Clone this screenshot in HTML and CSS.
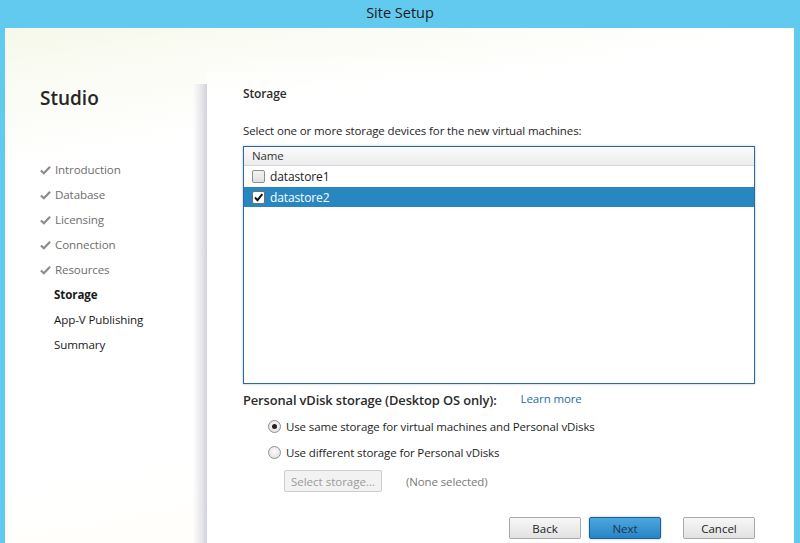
FILE: index.html
```html
<!DOCTYPE html>
<html lang="en">
<head>
    <meta charset="UTF-8">
    <title>Site Setup</title>
    <link rel="stylesheet" href="styles.css">
</head>
<body>
    <div class="window">
        <div class="titlebar">Site Setup</div>
        <div class="frame">
            <div class="sidebar">
                <h1 class="brand">Studio</h1>
                <ul class="steps">
                    <li class="step done"><svg class="tick" viewBox="0 0 12 10"><path d="M1 5.5 L4.2 8.6 L11 1.4" /></svg>Introduction</li>
                    <li class="step done"><svg class="tick" viewBox="0 0 12 10"><path d="M1 5.5 L4.2 8.6 L11 1.4" /></svg>Database</li>
                    <li class="step done"><svg class="tick" viewBox="0 0 12 10"><path d="M1 5.5 L4.2 8.6 L11 1.4" /></svg>Licensing</li>
                    <li class="step done"><svg class="tick" viewBox="0 0 12 10"><path d="M1 5.5 L4.2 8.6 L11 1.4" /></svg>Connection</li>
                    <li class="step done"><svg class="tick" viewBox="0 0 12 10"><path d="M1 5.5 L4.2 8.6 L11 1.4" /></svg>Resources</li>
                    <li class="step active">Storage</li>
                    <li class="step">App-V Publishing</li>
                    <li class="step">Summary</li>
                </ul>
            </div>
            <div class="panel">
                <h2 class="panel-title">Storage</h2>
                <p class="hint">Select one or more storage devices for the new virtual machines:</p>
                <div class="listbox">
                    <div class="list-head">Name</div>
                    <div class="list-row"><span class="check"></span>datastore1</div>
                    <div class="list-row selected"><span class="check checked"><svg viewBox="0 0 11 11"><path d="M2 5.5 L4.5 8.2 L9.3 2.2" /></svg></span>datastore2</div>
                </div>
                <div class="vdisk">
                    <span class="vdisk-label">Personal vDisk storage (Desktop OS only):</span>
                    <a class="learn" href="#">Learn more</a>
                </div>
                <div class="options">
                    <div class="option"><span class="radio on"></span>Use same storage for virtual machines and Personal vDisks</div>
                    <div class="option"><span class="radio"></span>Use different storage for Personal vDisks</div>
                    <div class="pick">
                        <button class="btn small" disabled>Select storage...</button>
                        <span class="none">(None selected)</span>
                    </div>
                </div>
                <div class="actions">
                    <button class="btn">Back</button>
                    <button class="btn primary">Next</button>
                    <button class="btn cancel">Cancel</button>
                </div>
            </div>
        </div>
    </div>
</body>
</html>
```

FILE: styles.css
```css
* {
    box-sizing: border-box;
}
body {
    margin: 0;
    font-family: "Open Sans", "Noto Sans", sans-serif;
    font-size: 11.5px;
    letter-spacing: -0.12px;
    color: #1e1e1e;
}
.window {
    width: 800px;
    height: 543px;
    display: flex;
    flex-direction: column;
    background: #62caef;
}
.titlebar {
    height: 28px;
    line-height: 26px;
    text-align: center;
    font-size: 14.5px;
    letter-spacing: 0;
    color: #1b1b1b;
}
.frame {
    flex: 1;
    display: flex;
    margin: 0 6px 0 5px;
    background: linear-gradient(170deg, #f6f8ea 0, #fbfcf5 70px, #ffffff 140px, #ffffff 70%, #fffdf4 100%);
}
.sidebar {
    width: 202px;
    padding-top: 56px;
    position: relative;
}
.brand {
    margin: 0 0 0 35px;
    font-size: 19px;
    font-weight: 600;
    line-height: 28px;
    letter-spacing: 0;
    color: #262626;
}
.steps {
    list-style: none;
    margin: 45px 0 0;
    padding: 0;
}
.step {
    position: relative;
    height: 25px;
    line-height: 25px;
    padding-left: 49px;
    font-size: 11.6px;
    color: #1a1a1a;
}
.step.done {
    color: #6e6e6e;
    padding-left: 35px;
}
.tick {
    width: 11px;
    height: 10px;
    margin-right: 4px;
    vertical-align: -1px;
    fill: none;
    stroke: #8c8c8c;
    stroke-width: 2.4;
}
.step.active {
    font-weight: 700;
}
.step.active::after {
    content: "";
    position: absolute;
    right: 0;
    top: 7px;
    border-top: 6px solid transparent;
    border-bottom: 6px solid transparent;
    border-right: 5px solid #ffffff;
}
.panel {
    flex: 1;
    position: relative;
    display: flex;
    flex-direction: column;
    padding: 57px 39px 4px 36px;
    background: linear-gradient(to bottom, rgba(255, 255, 255, 0) 20px, #ffffff 70px);
}
.panel::before {
    content: "";
    position: absolute;
    left: -14px;
    top: 56px;
    bottom: 0;
    width: 14px;
    background: linear-gradient(to right, rgba(220, 220, 230, 0) 0, #e6e6ec 60%, #d2d2dc 100%);
}
.panel-title {
    margin: 0;
    font-size: 12px;
    font-weight: 600;
    line-height: 18px;
    color: #2c2c2c;
}
.hint {
    margin: 20px 0 0;
    line-height: 16px;
}
.listbox {
    margin-top: 7px;
    height: 238px;
    border: 1px solid #33679a;
    box-shadow: 0 0 2px rgba(60, 120, 180, 0.5);
    background: #ffffff;
}
.list-head {
    height: 19px;
    line-height: 18px;
    padding-left: 8px;
    border-bottom: 1px solid #d6d6d8;
    background: linear-gradient(to bottom, #fbfbfb, #ececee);
    color: #333333;
}
.list-row {
    display: flex;
    align-items: center;
    height: 21px;
    padding-left: 8px;
    font-size: 12px;
    color: #222222;
}
.list-row.selected {
    height: 20px;
    background: #2887c0;
    color: #ffffff;
}
.check {
    width: 13px;
    height: 13px;
    margin-right: 5px;
    border: 1px solid #8e8f8f;
    border-radius: 2px;
    background: linear-gradient(to bottom, #f3f3f3, #e0e0e0);
}
.check.checked {
    background: #ffffff;
    border-color: #707070;
}
.check svg {
    display: block;
    width: 11px;
    height: 11px;
    fill: none;
    stroke: #111111;
    stroke-width: 1.9;
}
.vdisk {
    display: flex;
    align-items: baseline;
    margin-top: 7px;
}
.vdisk-label {
    font-size: 12.9px;
    font-weight: 600;
    color: #2b2b2b;
}
.learn {
    margin-left: 24px;
    color: #1d6ea8;
    text-decoration: none;
    font-size: 11.5px;
    position: relative;
    top: -2px;
}
.options {
    padding-left: 25px;
    margin-top: 4px;
}
.option {
    display: flex;
    align-items: center;
    height: 26px;
}
.radio {
    width: 13px;
    height: 13px;
    margin-right: 5px;
    border: 1px solid #8e8f8f;
    border-radius: 50%;
    background: radial-gradient(circle at 50% 40%, #fbfbfb, #dcdcdc);
    display: flex;
    align-items: center;
    justify-content: center;
}
.radio.on::after {
    content: "";
    width: 5px;
    height: 5px;
    border-radius: 50%;
    background: #222222;
}
.pick {
    display: flex;
    align-items: center;
    margin-top: 5px;
    padding-left: 16px;
}
.none {
    margin-left: 24px;
    color: #7a7a7a;
}
.btn {
    width: 72px;
    height: 22px;
    padding: 0;
    font-family: inherit;
    font-size: 11.5px;
    color: #222222;
    border: 1px solid #a9a9a9;
    border-radius: 2px;
    background: linear-gradient(to bottom, #f7f7f7, #e2e2e2);
}
.btn.small {
    width: 98px;
    color: #9a9a9a;
    border-color: #cdcdcd;
    background: #f2f2f2;
}
.actions {
    margin-top: auto;
    display: flex;
    justify-content: flex-end;
    gap: 8px;
}
.btn.primary {
    color: #1b3550;
    border-color: #1f5f93;
    background: linear-gradient(to bottom, #4ca7e0, #2a84c4);
    box-shadow: 0 0 2px rgba(40, 130, 200, 0.6);
}
.btn.cancel {
    margin-left: 14px;
}
```
